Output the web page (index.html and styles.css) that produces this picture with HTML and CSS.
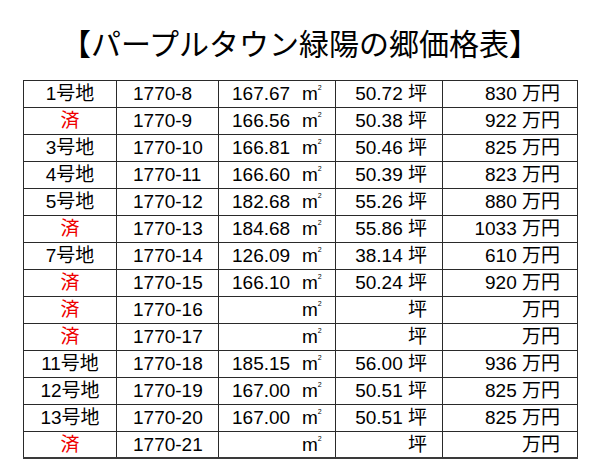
FILE: index.html
```html
<!DOCTYPE html>
<html lang="ja">
<head>
<meta charset="utf-8">
<link rel="stylesheet" href="styles.css">
</head>
<body>
<h1 class="title">【パープルタウン緑陽の郷価格表】</h1>
<table class="price">
<colgroup><col class="c1"><col class="c2"><col class="c3"><col class="c4"><col class="c5"></colgroup>
<tbody>
<tr><td class="lot">1号地</td><td class="no">1770-8</td><td class="area"><span class="num">167.67</span><span class="m2">m<sup>2</sup></span></td><td class="tsubo">50.72 坪</td><td class="yen">830 万円</td></tr>
<tr><td class="lot sold">済</td><td class="no">1770-9</td><td class="area"><span class="num">166.56</span><span class="m2">m<sup>2</sup></span></td><td class="tsubo">50.38 坪</td><td class="yen">922 万円</td></tr>
<tr><td class="lot">3号地</td><td class="no">1770-10</td><td class="area"><span class="num">166.81</span><span class="m2">m<sup>2</sup></span></td><td class="tsubo">50.46 坪</td><td class="yen">825 万円</td></tr>
<tr><td class="lot">4号地</td><td class="no">1770-11</td><td class="area"><span class="num">166.60</span><span class="m2">m<sup>2</sup></span></td><td class="tsubo">50.39 坪</td><td class="yen">823 万円</td></tr>
<tr><td class="lot">5号地</td><td class="no">1770-12</td><td class="area"><span class="num">182.68</span><span class="m2">m<sup>2</sup></span></td><td class="tsubo">55.26 坪</td><td class="yen">880 万円</td></tr>
<tr><td class="lot sold">済</td><td class="no">1770-13</td><td class="area"><span class="num">184.68</span><span class="m2">m<sup>2</sup></span></td><td class="tsubo">55.86 坪</td><td class="yen">1033 万円</td></tr>
<tr><td class="lot">7号地</td><td class="no">1770-14</td><td class="area"><span class="num">126.09</span><span class="m2">m<sup>2</sup></span></td><td class="tsubo">38.14 坪</td><td class="yen">610 万円</td></tr>
<tr><td class="lot sold">済</td><td class="no">1770-15</td><td class="area"><span class="num">166.10</span><span class="m2">m<sup>2</sup></span></td><td class="tsubo">50.24 坪</td><td class="yen">920 万円</td></tr>
<tr><td class="lot sold">済</td><td class="no">1770-16</td><td class="area"><span class="num"></span><span class="m2">m<sup>2</sup></span></td><td class="tsubo">坪</td><td class="yen">万円</td></tr>
<tr><td class="lot sold">済</td><td class="no">1770-17</td><td class="area"><span class="num"></span><span class="m2">m<sup>2</sup></span></td><td class="tsubo">坪</td><td class="yen">万円</td></tr>
<tr><td class="lot">11号地</td><td class="no">1770-18</td><td class="area"><span class="num">185.15</span><span class="m2">m<sup>2</sup></span></td><td class="tsubo">56.00 坪</td><td class="yen">936 万円</td></tr>
<tr><td class="lot">12号地</td><td class="no">1770-19</td><td class="area"><span class="num">167.00</span><span class="m2">m<sup>2</sup></span></td><td class="tsubo">50.51 坪</td><td class="yen">825 万円</td></tr>
<tr><td class="lot">13号地</td><td class="no">1770-20</td><td class="area"><span class="num">167.00</span><span class="m2">m<sup>2</sup></span></td><td class="tsubo">50.51 坪</td><td class="yen">825 万円</td></tr>
<tr><td class="lot sold">済</td><td class="no">1770-21</td><td class="area"><span class="num"></span><span class="m2">m<sup>2</sup></span></td><td class="tsubo">坪</td><td class="yen">万円</td></tr>
</tbody>
</table>
</body>
</html>
```
FILE: styles.css
```css
html, body {
  margin: 0;
  padding: 0;
  background: #fff;
}
body {
  font-family: "Liberation Sans", "Noto Sans CJK JP", sans-serif;
  color: #000;
}
.title {
  margin: 0;
  padding-top: 24px;
  height: 80px;
  box-sizing: border-box;
  font-family: "Noto Sans CJK JP", sans-serif;
  font-weight: 400;
  font-size: 30px;
  line-height: 36px;
  text-align: center;
}
.price {
  margin-left: 23px;
  border-collapse: collapse;
  table-layout: fixed;
  width: 554px;
  font-size: 19px;
}
.c1 { width: 93px; }
.c2 { width: 102px; }
.c3 { width: 117px; }
.c4 { width: 107px; }
.c5 { width: 135px; }
.price td {
  border: 1px solid #2a2a2a;
  height: 26px;
  padding: 0;
  line-height: 20px;
  white-space: nowrap;
  overflow: hidden;
}
.price tr:last-child td {
  border-bottom: 2px solid #3a3a3a;
  height: 25px;
}
.lot {
  text-align: center;
}
.sold {
  color: #ee0000;
}
.price td.no {
  padding-left: 16px;
}
.price td.area {
  padding-left: 13px;
}
.area .num {
  display: inline-block;
  width: 70px;
}
.m2 sup {
  font-size: 7px;
  vertical-align: 10px;
  line-height: 0;
}
.price td.tsubo {
  text-align: right;
  padding-right: 15px;
}
.price td.yen {
  text-align: right;
  padding-right: 17px;
}
```
